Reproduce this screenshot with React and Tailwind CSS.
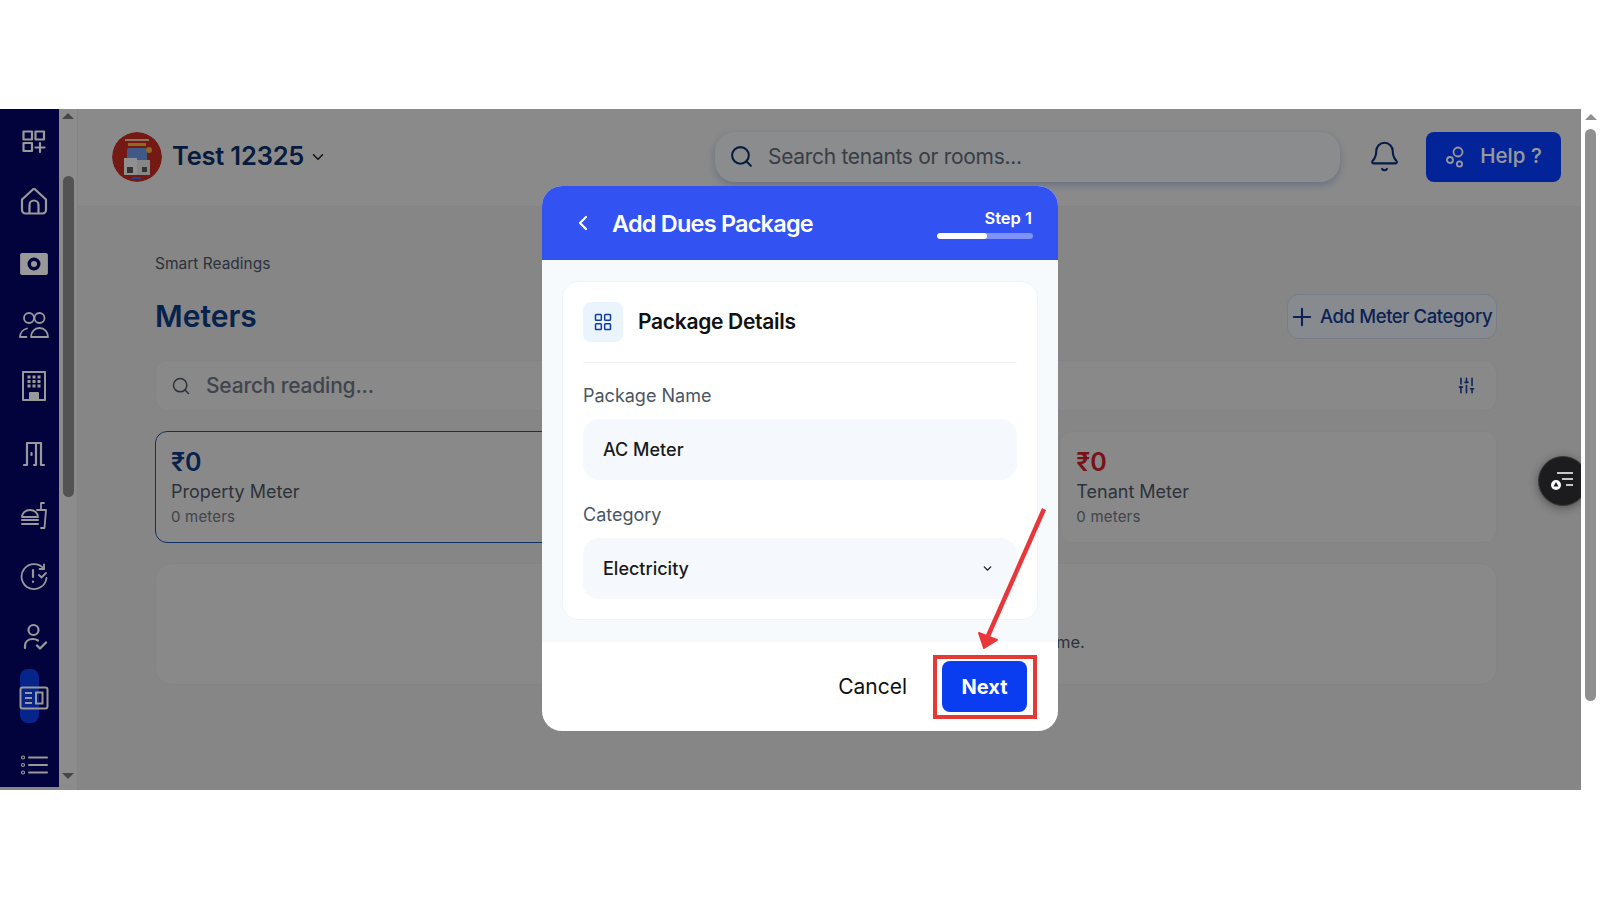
import { Bell, ChevronDown, ChevronLeft, LayoutGrid, Plus, Search, SlidersVertical } from "lucide-react";

const Svg = ({ children }) => (
    <svg viewBox="0 0 30 30" className="w-[30px] h-[30px]" fill="none" stroke="currentColor" strokeWidth="1.8" strokeLinecap="round" strokeLinejoin="round">
        {children}
    </svg>
);

const navIcons = [
    {
        icon: (
            <Svg>
                <rect x="4.5" y="4.5" width="8.5" height="8" strokeWidth="2.200" />
                <rect x="16.5" y="4.500" width="8.5" height="8" strokeWidth="2.200" />
                <rect x="4.5" y="16" width="8.5" height="8" strokeWidth="2.200" />
                <path d="M21 16v9M16.5 20.5h9" strokeWidth="2.200" />
            </Svg>
        ),
    },
    {
        icon: (
            <Svg>
                <path d="M3 11.500 15 .5l12 11V22a3.5 3.5 0 0 1-3.5 3.500h-17A3.500 3.500 0 0 1 3 22Z" strokeWidth="2.200" />
                <path d="M10.500 25v-8a4.500 4.500 0 0 1 9 0v8" strokeWidth="2.200" />
            </Svg>
        ),
    },
    {
        icon: (
            <Svg>
                <rect x="2" y="5" width="26" height="20" rx="1" fill="currentColor" />
                <circle cx="15" cy="15" r="6.500" fill="#040464" stroke="none" />
                <circle cx="15" cy="15" r="3" fill="currentColor" stroke="none" />
            </Svg>
        ),
    },
    {
        icon: (
            <Svg>
                <circle cx="10" cy="8" r="5" />
                <circle cx="20.500" cy="8" r="5" />
                <path d="M12 27h17c0-5-3.500-9-8.500-9S12 22 12 27Z" />
                <path d="M1 27h6.500M1 27c0-4 3-7.500 7-8.500" />
            </Svg>
        ),
    },
    {
        icon: (
            <Svg>
                <rect x="4" y="1" width="22" height="28" strokeWidth="2" />
                <path d="M8.500 6h3M13.500 6h3M18.500 6h3M8.500 10.500h3M13.500 10.500h3M18.500 10.500h3M8.500 15h3M13.500 15h3M18.500 15h3" strokeWidth="3" strokeLinecap="butt" />
                <path d="M11 29v-7h8v7" strokeWidth="2" fill="currentColor" />
            </Svg>
        ),
    },
    {
        extra: "mt-[7px]",
        icon: (
            <Svg>
                <path d="M5 26h3M8 26V4h9v22h-2M17 4h5v22h3" strokeWidth="2.200" />
                <path d="M12.500 14v2" strokeWidth="2.200" />
            </Svg>
        ),
    },
    {
        icon: (
            <Svg>
                <path d="M3 17c0-4 3.500-7 8-7s8 3 8 7Z" />
                <path d="M3 20h16M3 24h16" strokeWidth="2" />
                <path d="M18 10h9l-1.500 18H22M22 10V3h3" />
            </Svg>
        ),
    },
    {
        icon: (
            <Svg>
                <path d="M25 8A12.500 12.500 0 1 0 27.500 17" />
                <path d="M25 3.500V8h-4.500" />
                <path d="M14 9v7" strokeWidth="2.200" />
                <path d="M14 20.500v.5" strokeWidth="2.200" />
                <path d="m20 14 2.500 2.500L27 12" />
            </Svg>
        ),
    },
    {
        icon: (
            <Svg>
                <circle cx="14.500" cy="8" r="5" strokeWidth="2.200" />
                <path d="M6 26v-2c0-4 3-7 8-7 2 0 3.500.5 5 1.500" strokeWidth="2.200" />
                <path d="m18 23.500 3 3 6-6" strokeWidth="2.400" />
            </Svg>
        ),
    },
    {
        active: true,
        icon: (
            <svg viewBox="0 0 30 24" className="w-[30px] h-[24px]" fill="none" stroke="currentColor" strokeWidth="2">
                <rect x="1.500" y="1.500" width="27" height="21" rx="2" />
                <path d="M6 7h7M6 12h7M6 17h7" />
                <rect x="17" y="6.500" width="6.500" height="11" />
            </svg>
        ),
    },
    {
        extra: "mt-[6px]",
        icon: (
            <Svg>
                <circle cx="4" cy="7.500" r="1.500" strokeWidth="1.200" />
                <circle cx="4" cy="15" r="1.500" strokeWidth="1.200" />
                <circle cx="4" cy="22.500" r="1.500" strokeWidth="1.200" />
                <path d="M10 7.500h18M10 15h18M10 22.500h18" strokeWidth="2" />
            </Svg>
        ),
    },
];

function Sidebar() {
    return (
        <div className="w-[59px] shrink-0 h-[678px] bg-[#040464] text-white pt-[2px] pl-[4px] overflow-hidden">
            {navIcons.map((item, i) => (
                <div key={i} className={`relative h-[61px] w-[60px] flex items-center ${item.extra || ""}`}>
                    {item.active && <div className="absolute left-[16px] top-[2px] w-[19px] h-[54px] rounded-lg bg-[#0a3ce6]" />}
                    <div className="relative ml-[15px]">{item.icon}</div>
                </div>
            ))}
        </div>
    );
}

function InnerScrollbar() {
    return (
        <div className="w-[19px] shrink-0 bg-[#e9e9e9] border-r border-[#dddddd] flex flex-col items-center pt-[4px]">
            <div className="w-0 h-0 border-x-[6px] border-x-transparent border-b-[6px] border-b-[#777777]" />
            <div className="w-[11px] h-[321px] rounded-full bg-[#8a8a8a] mt-[57px]" />
            <div className="w-0 h-0 border-x-[6px] border-x-transparent border-t-[6px] border-t-[#777777] mt-[276px]" />
        </div>
    );
}

function Header() {
    return (
        <div className="h-[98px] bg-[#e7e7e7] border-b border-[#dcdcdc] flex items-center pl-[34px] pr-[20px] pb-[2px]">
            <svg viewBox="0 0 50 50" className="w-[50px] h-[50px] rounded-full shrink-0">
                <circle cx="25" cy="25" r="25" fill="#c22a20" />
                <rect x="13" y="7" width="24" height="2" fill="#e8c4a0" />
                <rect x="16" y="11" width="18" height="3" fill="#f0b030" />
                <rect x="15" y="16" width="20" height="14" rx="2" fill="#6d94e0" />
                <rect x="12" y="26" width="13" height="17" fill="#f1f1f1" />
                <rect x="25" y="28" width="13" height="15" fill="#e2e2e2" />
                <rect x="15" y="35" width="6" height="6" fill="#555" />
                <rect x="30" y="35" width="5" height="5" fill="#555" />
                <circle cx="37" cy="18" r="3" fill="#f0b030" />
                <rect x="20" y="45" width="9" height="2" fill="#3b6ee0" />
            </svg>
            <div className="ml-[10px] w-[137px] text-[25.500px] font-semibold text-[#0d2f66] tracking-[-0.2px] whitespace-nowrap">Test 12325</div>
            <ChevronDown className="shrink-0 text-[#1a1a2e]" size={18} strokeWidth={2} />
            <div className="ml-[388px] shrink-0 w-[625px] h-[50px] rounded-[20px] bg-[#e8e9ed] shadow-[0_3px_8px_rgba(120,150,200,0.55)] flex items-center pl-[14px]">
                <Search className="text-[#0d2f66]" size={25} strokeWidth={2} />
                <div className="ml-[14px] text-[21px] text-[#5f6672] tracking-[-0.3px]">Search tenants or rooms...</div>
            </div>
            <Bell className="ml-[28px] shrink-0 text-[#0a2c78]" size={33} strokeWidth={1.500} />
            <div className="ml-auto w-[135px] h-[50px] shrink-0 rounded-lg bg-[#063cff] text-white flex items-center justify-center gap-[13px]">
                <svg viewBox="0 0 22 22" className="w-[22px] h-[22px]" fill="none" stroke="currentColor" strokeWidth="1.800">
                    <circle cx="13" cy="6" r="4.500" />
                    <circle cx="5" cy="14" r="3" />
                    <circle cx="14.500" cy="18" r="2.600" />
                </svg>
                <span className="text-[20.500px] font-medium">Help ?</span>
            </div>
        </div>
    );
}

function StatCard({ value, valueClass, label, count, active }) {
    return (
        <div className={`h-[112px] rounded-xl bg-[#e4e4e5] border px-[15px] pt-[14px] ${active ? "border-[#1d4fb0]" : "border-[#dcdde0]"}`}>
            {label && (
                <>
                    <div className={`text-[25px] leading-[32px] font-semibold ${valueClass}`}>{value}</div>
                    <div className="text-[18px] leading-[28px] text-[#4b5563]">{label}</div>
                    <div className="text-[15px] leading-[22px] text-[#6b7280] tracking-[0.2px]">{count}</div>
                </>
            )}
        </div>
    );
}

function Main() {
    return (
        <div className="flex-1 min-w-0 bg-[#dfdfe0]">
            <Header />
            <div className="pl-[77px] pr-[84px]">
                <div className="mt-[47px] text-[15.500px] leading-[20px] text-[#4b5563]">Smart Readings</div>
                <div className="flex items-center justify-between mt-[20px] h-[45px]">
                    <div className="text-[30px] font-semibold text-[#0d3a80]">Meters</div>
                    <div className="w-[210px] h-[45px] rounded-xl border border-[#c9d2e2] bg-[#e2e6ee] flex items-center gap-[4px] text-[#143a8c]">
                        <Plus size={28} strokeWidth={1.800} />
                        <span className="text-[18.500px] font-medium whitespace-nowrap tracking-[-0.4px]">Add Meter Category</span>
                    </div>
                </div>
                <div className="mt-[21px] h-[51px] rounded-xl bg-[#e4e4e5] border border-[#dcdde0] flex items-center pl-[15px] pr-[20px]">
                    <Search className="text-[#4b5563]" size={20} strokeWidth={1.800} />
                    <div className="ml-[15px] text-[21px] text-[#6b7280] font-medium tracking-[-0.2px]">Search reading...</div>
                    <SlidersVertical className="ml-auto text-[#143a8c]" size={19} strokeWidth={2} />
                </div>
                <div className="mt-[20px] grid grid-cols-3 gap-[16px]">
                    <StatCard value="₹0" valueClass="text-[#0d3a80]" label="Property Meter" count="0 meters" active />
                    <StatCard />
                    <StatCard value="₹0" valueClass="text-[#c81e28]" label="Tenant Meter" count="0 meters" />
                </div>
                <div className="mt-[20px] h-[122px] rounded-2xl bg-[#e4e4e5] border border-[#dcdde0] flex items-end justify-center pb-[29px] text-[16.500px] text-[#4b5563] whitespace-nowrap">
                    No meter categories have been added to this property at this time.
                </div>
            </div>
        </div>
    );
}

function Field({ label, children, className }) {
    return (
        <div className={className}>
            <div className="text-[18px] leading-[24px] text-[#4b5563]">{label}</div>
            <div className="mt-[11px] h-[61px] rounded-2xl bg-[#f5f9fd] flex items-center pl-[20px] pr-[23px] text-[18px] font-medium text-[#1a1a1a]">
                {children}
            </div>
        </div>
    );
}

function Modal() {
    return (
        <div className="absolute left-[542px] top-[186px] w-[516px] h-[545px] rounded-[20px] overflow-hidden bg-white flex flex-col">
            <div className="h-[74px] bg-[#3352f2] text-white flex items-center pl-[29px] pr-[25px]">
                <ChevronLeft size={24} strokeWidth={2.200} />
                <div className="ml-[17px] mt-[1px] text-[23.500px] font-semibold tracking-[-0.8px]">Add Dues Package</div>
                <div className="ml-auto w-[96px]">
                    <div className="text-[16.500px] leading-[20px] font-semibold text-right pr-[1px]">Step 1</div>
                    <div className="mt-[5px] h-[6px] rounded-full bg-[#7f92f8] overflow-hidden">
                        <div className="w-[50px] h-full rounded-full bg-white" />
                    </div>
                </div>
            </div>
            <div className="h-[382px] bg-[#f6fafd] pt-[21px] px-[20px]">
                <div className="h-[339px] rounded-2xl bg-white border border-[#f0f4f8] px-[20px] pt-[20px]">
                    <div className="flex items-center h-[61px] pb-[21px] border-b border-[#f1f3f6]">
                        <div className="w-[40px] h-[40px] rounded-lg bg-[#e9f4fd] flex items-center justify-center text-[#0f3c9e]">
                            <LayoutGrid size={20} strokeWidth={1.800} />
                        </div>
                        <div className="ml-[15px] mt-[1px] text-[21px] font-semibold text-[#111111] tracking-[-0.3px]">Package Details</div>
                    </div>
                    <Field label="Package Name" className="mt-[21px]">AC Meter</Field>
                    <Field label="Category" className="mt-[23px]">
                        <span>Electricity</span>
                        <ChevronDown className="ml-auto" size={13} strokeWidth={2.500} />
                    </Field>
                </div>
            </div>
            <div className="flex-1 flex items-center justify-end pr-[31px]">
                <div className="mt-[1px] text-[21px] text-[#111111]">Cancel</div>
                <div className="ml-[35px] w-[85px] h-[51px] rounded-lg bg-[#0a3cf0] text-white flex items-center justify-center text-[20px] font-bold">
                    Next
                </div>
            </div>
        </div>
    );
}

function OuterScrollbar() {
    return (
        <div className="w-[19px] shrink-0 flex flex-col items-center pt-[5px]">
            <div className="w-0 h-0 border-x-[6px] border-x-transparent border-b-[6px] border-b-[#8f8f8f]" />
            <div className="w-[11px] h-[572px] rounded-full bg-[#8f8f8f] mt-[9px]" />
        </div>
    );
}

export default function App() {
    return (
        <div className="relative w-[1600px] h-[900px] overflow-hidden bg-white pt-[109px] font-['Inter',sans-serif]">
            <div className="flex h-[681px]">
                <div className="relative flex flex-1 min-w-0 overflow-hidden bg-[#dfdfe0]">
                    <Sidebar />
                    <InnerScrollbar />
                    <Main />
                    {/* dim layer behind the dialog */}
                    <div className="absolute inset-0 bg-black/40" />
                    <div className="absolute left-[1538px] top-[347px] w-[50px] h-[50px] rounded-full bg-[#1c1c1f] border border-[#3a3a3a] shadow-[0_2px_10px_rgba(0,0,0,0.4)] flex items-center justify-start pl-[11px] text-white">
                        <svg viewBox="0 0 24 20" className="w-[24px] h-[20px]">
                            <path d="M7 2h16M12 8h11M16 14h7" stroke="currentColor" strokeWidth="1.600" fill="none" />
                            <circle cx="6" cy="14" r="5" fill="currentColor" />
                            <path d="M6 11l2.500 4.500h-5Z" fill="#1c1c1f" />
                        </svg>
                    </div>
                </div>
                <OuterScrollbar />
            </div>
            <Modal />
            {/* annotation drawn on top of the screenshot */}
            <div className="absolute left-[933px] top-[655px] w-[104px] h-[64px] border-[4px] border-[#e53935]" />
            <svg className="absolute left-[970px] top-[500px]" width="80" height="155" viewBox="0 0 80 155">
                <path d="M74 9 18 136" stroke="#e8373a" strokeWidth="4.500" strokeLinecap="butt" />
                <path d="M14 148 9 133 27 140Z" fill="#e8373a" stroke="#e8373a" strokeWidth="2" strokeLinejoin="round" />
            </svg>
        </div>
    );
}
